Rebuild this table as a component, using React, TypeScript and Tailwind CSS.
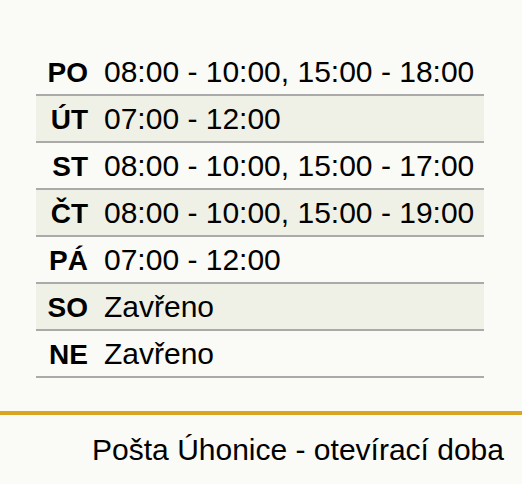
import React from 'react';

const hours = [
  { day: 'PO', time: '08:00 - 10:00, 15:00 - 18:00' },
  { day: 'ÚT', time: '07:00 - 12:00' },
  { day: 'ST', time: '08:00 - 10:00, 15:00 - 17:00' },
  { day: 'ČT', time: '08:00 - 10:00, 15:00 - 19:00' },
  { day: 'PÁ', time: '07:00 - 12:00' },
  { day: 'SO', time: 'Zavřeno' },
  { day: 'NE', time: 'Zavřeno' }
];

export default function App() {
  return (
    <div className="flex h-[484px] w-[522px] flex-col bg-[#fafaf6] font-['Liberation_Sans',Arial,sans-serif] text-black">
      <div className="pl-[36px] pt-[49px]">
        <div className="flex w-[448px] flex-col">
          {hours.map((row, i) => (
            <div
              key={row.day}
              className={
                i % 2 === 1
                  ? 'flex h-[47px] items-baseline border-b-2 border-[#aaaaaa] bg-[#f0f1e6]'
                  : 'flex h-[47px] items-baseline border-b-2 border-[#aaaaaa]'
              }
            >
              <div className="w-[60px] shrink-0 pr-[8px] text-right text-[28px] font-bold">{row.day}</div>
              <div className="pl-[8px] text-[30px]">{row.time}</div>
            </div>
          ))}
        </div>
      </div>
      <div className="mt-[33px] border-t-4 border-[#daa520] pr-[18px] pt-[12px] text-right text-[30px]">
        Pošta Úhonice - otevírací doba
      </div>
    </div>
  );
}
